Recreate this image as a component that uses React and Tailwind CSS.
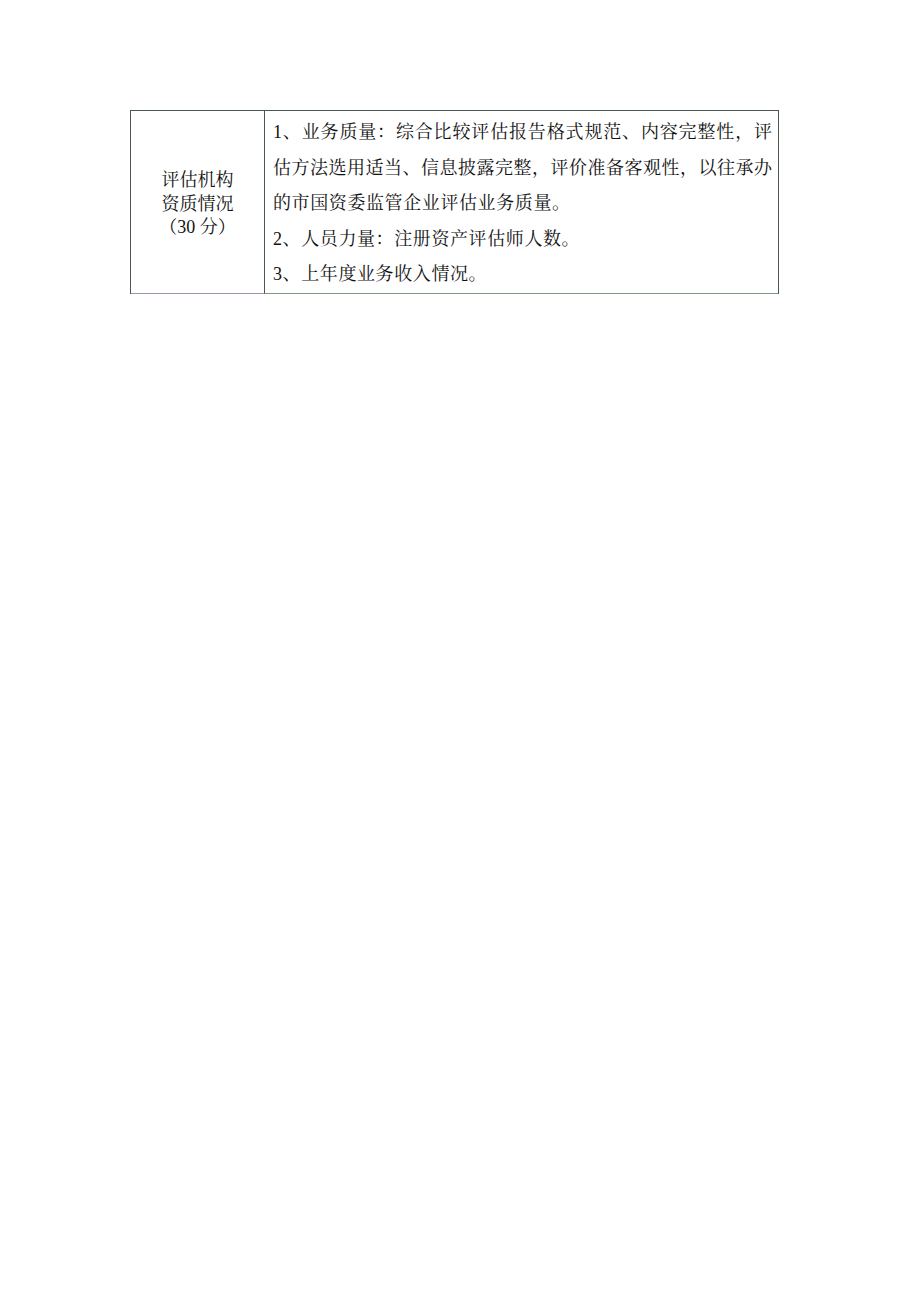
export default function App() {
  const font = { fontFamily: '"Liberation Serif", "Noto Serif CJK SC", "Noto Sans CJK SC", serif' };
  const lines = [
    { text: '1、业务质量：综合比较评估报告格式规范、内容完整性，评', full: true },
    { text: '估方法选用适当、信息披露完整，评价准备客观性，以往承办', full: true },
    { text: '的市国资委监管企业评估业务质量。', full: false },
    { text: '2、人员力量：注册资产评估师人数。', full: false },
    { text: '3、上年度业务收入情况。', full: false },
  ];

  return (
    <div className="w-[920px] h-[1302px] bg-white pt-[110px] pl-[130px]" style={font}>
      <div className="flex w-[649px] border-t border-l border-r border-[#4a5a4a] text-[18px] text-[#111]">
        <div className="w-[134px] shrink-0 flex flex-col items-center justify-center border-r border-[#4a5a4a] border-b border-b-[#a98fb3] leading-[23.5px] pt-[5px]">
          <div>评估机构</div>
          <div>资质情况</div>
          <div>（30 分）</div>
        </div>
        <div className="flex-1 pl-[8px] pr-[6px] pt-[4px] border-b border-b-[#7d9a80] leading-[35.5px]">
          {lines.map((l, i) => (
            <div
              key={i}
              className={l.full ? 'text-justify [text-align-last:justify]' : 'tracking-[0.6px]'}
            >
              {l.text}
            </div>
          ))}
        </div>
      </div>
    </div>
  );
}
